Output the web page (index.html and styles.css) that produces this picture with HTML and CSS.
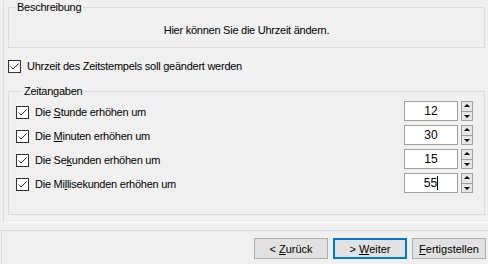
FILE: index.html
```html
<!DOCTYPE html>
<html lang="de">
<head>
<meta charset="utf-8">
<title>Zeitstempel</title>
<link rel="stylesheet" href="styles.css">
</head>
<body>
<div class="top">
  <fieldset class="group desc">
    <legend>Beschreibung</legend>
    <p class="desc-text">Hier können Sie die Uhrzeit ändern.</p>
  </fieldset>
  <div class="check main">
    <svg class="cb" width="13" height="13" viewBox="0 0 13 13"><rect x="0.5" y="0.5" width="12" height="12" fill="#fff" stroke="#333"/><path d="M2.5 6.5 L5 9 L10.5 3.5" fill="none" stroke="#333" stroke-width="1"/></svg>
    <span>Uhrzeit des Zeitstempels soll <u>g</u>eändert werden</span>
  </div>
  <fieldset class="group times">
    <legend>Zeitangaben</legend>
    <div class="row">
      <div class="check">
        <svg class="cb" width="13" height="13" viewBox="0 0 13 13"><rect x="0.5" y="0.5" width="12" height="12" fill="#fff" stroke="#333"/><path d="M2.5 6.5 L5 9 L10.5 3.5" fill="none" stroke="#333"/></svg>
        <span>Die <u>S</u>tunde erhöhen um</span>
      </div>
      <div class="spin"><span class="field">12</span><span class="arrows"><span class="up"></span><span class="down"></span></span></div>
    </div>
    <div class="row">
      <div class="check">
        <svg class="cb" width="13" height="13" viewBox="0 0 13 13"><rect x="0.5" y="0.5" width="12" height="12" fill="#fff" stroke="#333"/><path d="M2.5 6.5 L5 9 L10.5 3.5" fill="none" stroke="#333"/></svg>
        <span>Die <u>M</u>inuten erhöhen um</span>
      </div>
      <div class="spin"><span class="field">30</span><span class="arrows"><span class="up"></span><span class="down"></span></span></div>
    </div>
    <div class="row">
      <div class="check">
        <svg class="cb" width="13" height="13" viewBox="0 0 13 13"><rect x="0.5" y="0.5" width="12" height="12" fill="#fff" stroke="#333"/><path d="M2.5 6.5 L5 9 L10.5 3.5" fill="none" stroke="#333"/></svg>
        <span>Die Se<u>k</u>unden erhöhen um</span>
      </div>
      <div class="spin"><span class="field">15</span><span class="arrows"><span class="up"></span><span class="down"></span></span></div>
    </div>
    <div class="row">
      <div class="check">
        <svg class="cb" width="13" height="13" viewBox="0 0 13 13"><rect x="0.5" y="0.5" width="12" height="12" fill="#fff" stroke="#333"/><path d="M2.5 6.5 L5 9 L10.5 3.5" fill="none" stroke="#333"/></svg>
        <span>Die Mi<u>l</u>lisekunden erhöhen um</span>
      </div>
      <div class="spin"><span class="field">55<span class="caret"></span></span><span class="arrows"><span class="up"></span><span class="down"></span></span></div>
    </div>
  </fieldset>
</div>
<div class="bottom">
  <button class="btn">&lt; <u>Z</u>urück</button>
  <button class="btn default">&gt; <u>W</u>eiter</button>
  <button class="btn"><u>F</u>ertigstellen</button>
</div>
</body>
</html>
```
FILE: styles.css
```css
html, body {
  margin: 0;
  padding: 0;
  background: #f0f0f0;
  font-family: "Liberation Sans", Arial, sans-serif;
  font-size: 11px;
  letter-spacing: -0.25px;
  color: #000;
  width: 488px;
  height: 264px;
  overflow: hidden;
}

.top {
  margin-left: 3px;
  height: 222px;
  box-sizing: border-box;
  border-left: 1px solid #dcdcdc;
  border-bottom: 1px solid #fff;
  padding: 0 3px 0 4px;
}

.group {
  margin: 0;
  padding: 0;
  border: 1px solid #dcdcdc;
  min-width: 0;
}

.group legend {
  margin-left: 6px;
  padding: 0 2px;
  line-height: 13px;
}

.desc {
  margin-top: 1px;
  padding: 10px 0 10px;
}

.desc-text {
  margin: 0;
  text-align: center;
  line-height: 13px;
}

.check {
  display: flex;
  align-items: center;
  gap: 6px;
  height: 13px;
  line-height: 13px;
  white-space: nowrap;
}

.cb {
  display: block;
  flex: none;
}

.main {
  margin-top: 12px;
}

.times {
  margin-top: 12px;
  padding: 1px 11px 19px 7px;
}

.row {
  display: flex;
  justify-content: space-between;
  align-items: flex-start;
  height: 24px;
}

.row .check {
  margin-top: 7px;
}

.spin {
  display: flex;
  gap: 3px;
  margin-top: 2px;
}

.field {
  display: flex;
  align-items: center;
  justify-content: center;
  width: 54px;
  height: 20px;
  box-sizing: border-box;
  border: 1px solid #a0a0a0;
  background: #fff;
  font-size: 12px;
  letter-spacing: 0;
}

.caret {
  display: inline-block;
  width: 1px;
  height: 14px;
  background: #000;
}

.arrows {
  display: flex;
  flex-direction: column;
  width: 12px;
  height: 20px;
  box-sizing: border-box;
  border: 1px solid #a0a0a0;
  background: #fff;
}

.up, .down {
  flex: 1;
  position: relative;
  background: #e6e6e6;
}

.up {
  border-bottom: 1px solid #a0a0a0;
}

.up::after, .down::after {
  content: "";
  position: absolute;
  left: 2px;
  width: 0;
  height: 0;
  border-left: 3px solid transparent;
  border-right: 3px solid transparent;
}

.up::after {
  top: 2px;
  border-bottom: 3px solid #000;
}

.down::after {
  top: 3px;
  border-top: 3px solid #000;
}

.bottom {
  margin-top: 7px;
  height: 35px;
  box-sizing: border-box;
  border-top: 1px solid #d9d9d9;
  border-left: 1px solid #dcdcdc;
  margin-left: 1px;
  display: flex;
  justify-content: flex-end;
  gap: 5px;
  padding: 7px 2px 0 0;
}

.btn {
  width: 74px;
  height: 21px;
  margin: 0;
  padding: 0;
  box-sizing: border-box;
  border: 1px solid #adadad;
  background: #e1e1e1;
  font-family: "Liberation Sans", Arial, sans-serif;
  font-size: 11px;
  color: #000;
}

.btn.default {
  border: 2px solid #0078d7;
}
```
